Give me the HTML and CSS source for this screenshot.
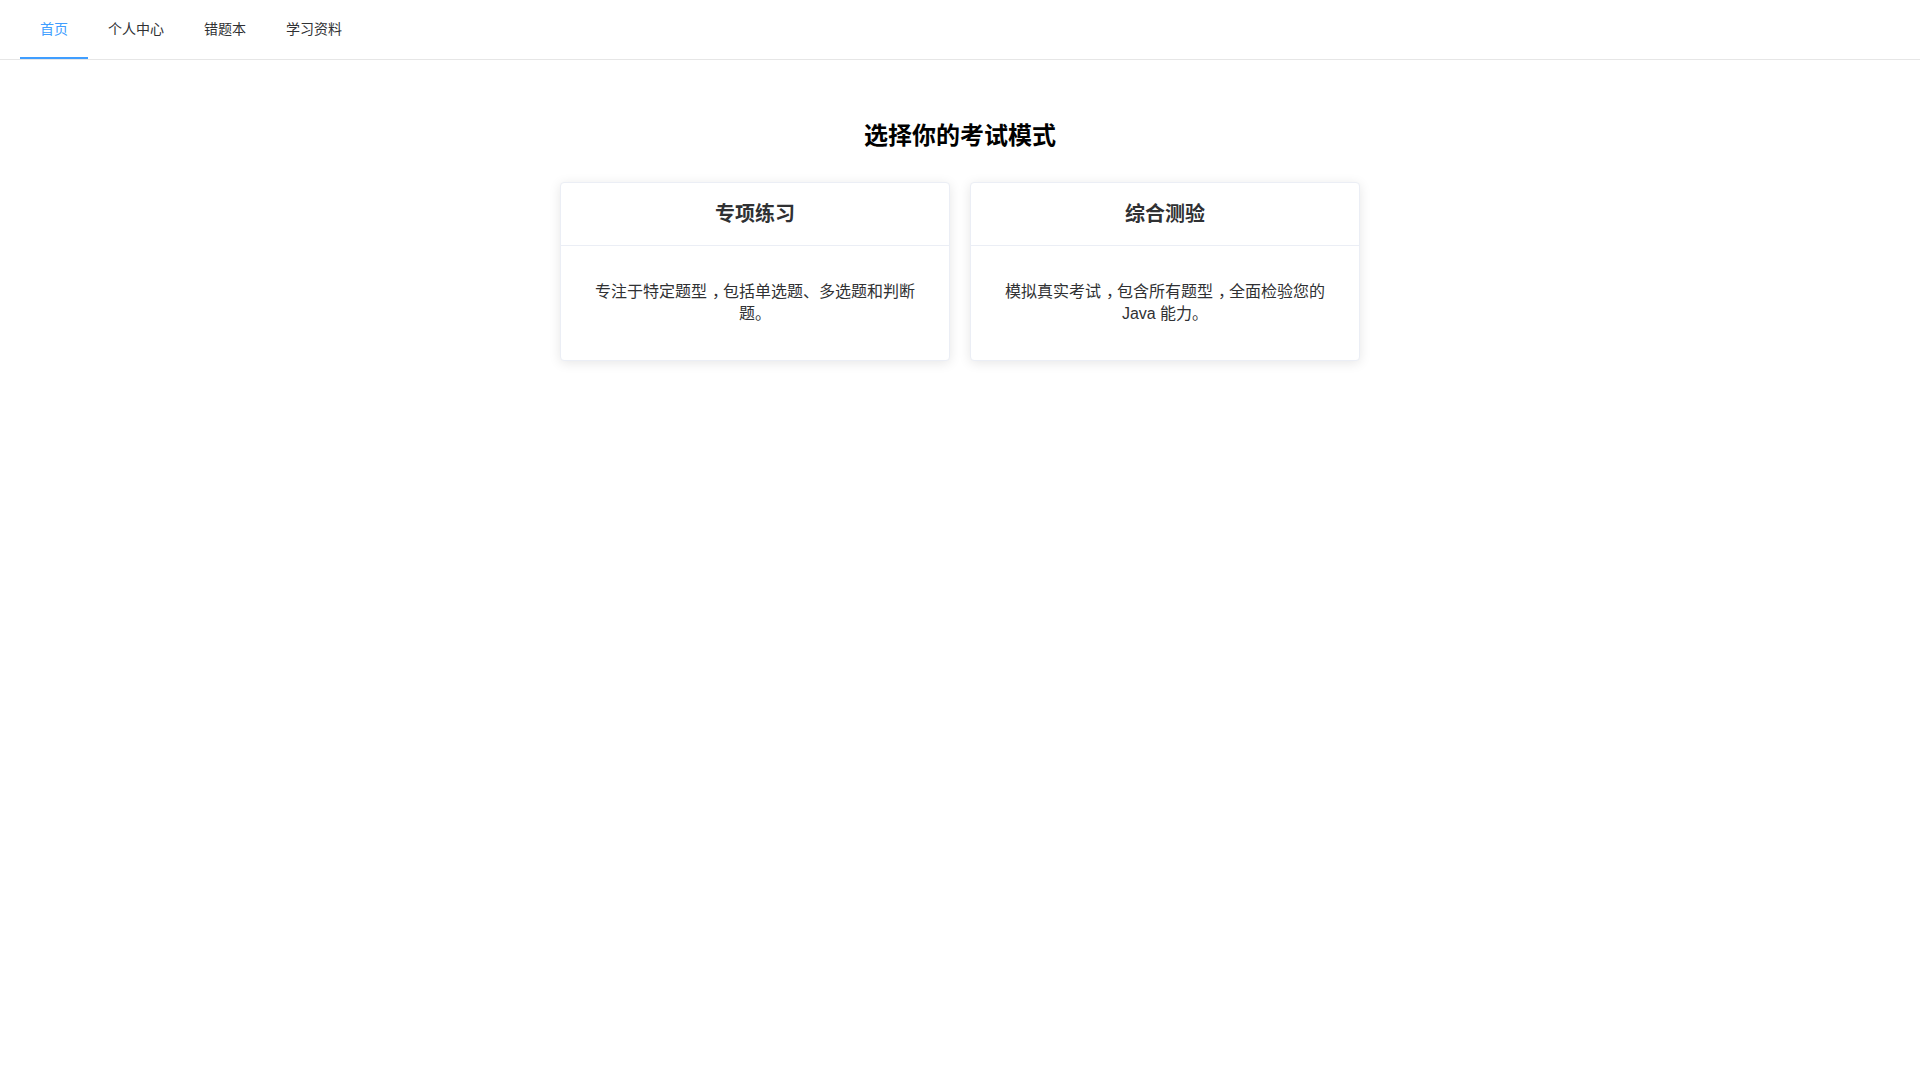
FILE: index.html
```html
<!DOCTYPE html>
<html lang="zh-CN">
<head>
<meta charset="utf-8">
<title>选择你的考试模式</title>
<link rel="stylesheet" href="styles.css">
</head>
<body>
<nav class="menu">
  <a class="menu-item is-active">首页</a>
  <a class="menu-item">个人中心</a>
  <a class="menu-item">错题本</a>
  <a class="menu-item">学习资料</a>
</nav>
<main class="main">
  <h2 class="title">选择你的考试模式</h2>
  <div class="cards">
    <div class="card">
      <div class="card-header">专项练习</div>
      <div class="card-body"><p>专注于特定题型<span class="punct">，</span>包括单选题、多选题和判断题。</p></div>
    </div>
    <div class="card">
      <div class="card-header">综合测验</div>
      <div class="card-body"><p>模拟真实考试<span class="punct">，</span>包含所有题型<span class="punct">，</span>全面检验您的<br>Java 能力。</p></div>
    </div>
  </div>
</main>
</body>
</html>
```

FILE: styles.css
```css
* { box-sizing: border-box; }
html, body {
  margin: 0;
  padding: 0;
  background: #fff;
  font-family: "Liberation Sans", Arial, "Noto Sans CJK SC", sans-serif;
  color: #303133;
}
.menu {
  display: flex;
  height: 60px;
  padding: 0 20px;
  border-bottom: 1px solid #e6e6e6;
}
.menu-item {
  display: block;
  height: 59px;
  line-height: 59px;
  padding: 0 20px;
  font-size: 14px;
  color: #303133;
  border-bottom: 2px solid transparent;
  cursor: pointer;
}
.menu-item.is-active {
  color: #409eff;
  border-bottom-color: #409eff;
}
.main {
  padding: 20px;
}
.title {
  margin: 38px 0 28px;
  text-align: center;
  font-size: 24px;
  line-height: 36px;
  font-weight: bold;
  color: #000;
}
.cards {
  width: 800px;
  margin: 0 auto;
  display: flex;
  gap: 20px;
}
.card {
  flex: 1;
  border: 1px solid #ebeef5;
  border-radius: 4px;
  background: #fff;
  box-shadow: 0 2px 12px 0 rgba(0, 0, 0, 0.1);
  overflow: hidden;
}
.card-header {
  padding: 18px 20px;
  border-bottom: 1px solid #ebeef5;
  text-align: center;
  font-size: 20px;
  line-height: 26px;
  font-weight: bold;
  color: #303133;
}
.card-body {
  padding: 20px;
  text-align: center;
}
.card-body p {
  margin: 15px 0;
  font-size: 16px;
  line-height: 22px;
  color: #303133;
}
.punct {
  display: inline-block;
  width: 1em;
  padding-left: 2px;
  text-align: center;
  font-feature-settings: "halt" 1;
}
```
